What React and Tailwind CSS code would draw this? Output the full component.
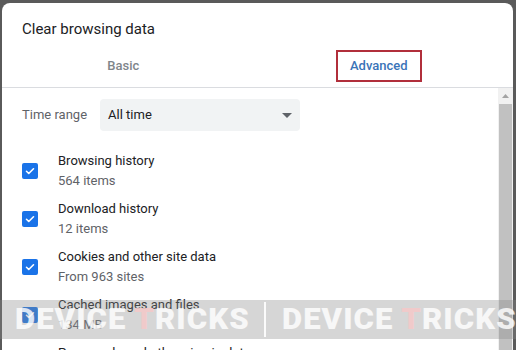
import React from "react";

const items = [
  { label: "Browsing history", sub: "564 items" },
  { label: "Download history", sub: "12 items" },
  { label: "Cookies and other site data", sub: "From 963 sites" },
  { label: "Cached images and files", sub: "134 MB" },
  { label: "Passwords and other sign-in data", sub: "None" },
];

const Checkbox = () => (
  <div className="w-4 h-4 rounded-[2px] bg-[#1a73e8] flex items-center justify-center shrink-0">
    <svg width="12" height="12" viewBox="0 0 24 24" fill="none" stroke="white" strokeWidth="3.2" strokeLinecap="round" strokeLinejoin="round">
      <path d="M5 12.5l4.5 4.5L19 7.5" />
    </svg>
  </div>
);

// watermark text sitting over the screenshot
const Watermark = () => (
  <div className="font-black text-[29px] leading-none tracking-[1px] text-white/80 scale-x-[1.07] origin-left whitespace-nowrap">
    DEVICE <span className="text-[#f4c9c9]/90">T</span>RICKS
  </div>
);

export default function App() {
  return (
    <div
      className="relative w-[516px] h-[350px] overflow-hidden bg-[#5a5a5a] pl-[2px] pr-[3px] pt-[3px]"
      style={{ fontFamily: "Roboto, 'Liberation Sans', sans-serif" }}
    >
      <div className="bg-white rounded-t-[8px] h-[400px] flex flex-col">
        <div className="pt-4 pl-5 text-[15px] leading-5 text-[#202124]">Clear browsing data</div>

        <div className="mt-[5px] h-[43px] flex items-center text-[13px] font-medium">
          <div className="w-[243px] text-center text-[#80868b]">Basic</div>
          <div className="w-[269px] flex justify-center">
            <div className="border-2 border-[#b12f3b] w-[86px] h-[32px] flex items-center justify-center text-[#3a74b8]">
              Advanced
            </div>
          </div>
        </div>

        <div className="h-px bg-[#dadce0]" />

        <div className="flex flex-1">
          <div className="flex-1 pl-5 pt-[11px]">
            <div className="flex items-center gap-[13px]">
              <span className="text-[13px] text-[#5f6368]">Time range</span>
              <div className="w-[200px] h-[32px] rounded-[4px] bg-[#f1f3f4] flex items-center justify-between pl-2 pr-[8px]">
                <span className="text-[13px] text-[#202124]">All time</span>
                <svg width="10" height="5" viewBox="0 0 10 5">
                  <path d="M0 0h10L5 5z" fill="#5f6368" />
                </svg>
              </div>
            </div>

            <div className="mt-[20px] flex flex-col gap-2">
              {items.map((it) => (
                <div key={it.label} className="flex items-center gap-5">
                  <Checkbox />
                  <div className="text-[13px] leading-5">
                    <div className="text-[#202124]">{it.label}</div>
                    <div className="text-[#5f6368]">{it.sub}</div>
                  </div>
                </div>
              ))}
            </div>
          </div>

          <div className="w-[15px] bg-[#f1f1f1] flex flex-col">
            <div className="h-[16px] flex items-center justify-center">
              <svg width="7" height="4" viewBox="0 0 7 4">
                <path d="M0 4h7L3.5 0z" fill="#a3a3a3" />
              </svg>
            </div>
            <div className="mx-[1px] flex-1 bg-[#c1c1c1]" />
          </div>
        </div>
      </div>

      <div className="absolute left-0 right-0 top-[300px] h-[39px] bg-[#8a8a8a]/35 flex items-center overflow-hidden">
        <div className="w-[264px] shrink-0 pl-[15px]">
          <Watermark />
        </div>
        <div className="w-[2px] h-[35px] shrink-0 bg-white/90" />
        <div className="pl-[16px]">
          <Watermark />
        </div>
      </div>
    </div>
  );
}
